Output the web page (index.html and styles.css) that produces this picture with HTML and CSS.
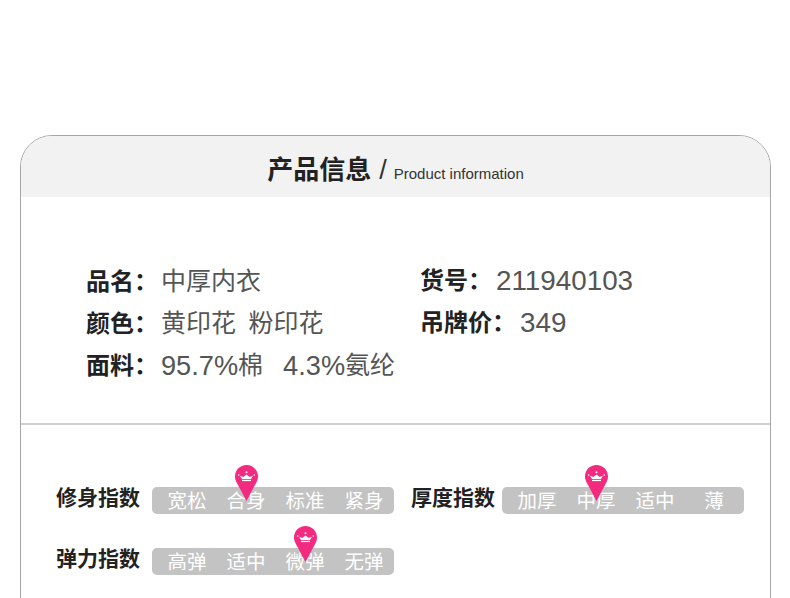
FILE: index.html
```html
<!DOCTYPE html>
<html lang="zh">
<head>
<meta charset="utf-8">
<title>产品信息</title>
<link rel="stylesheet" href="styles.css">
</head>
<body>
<svg class="defs" width="0" height="0" aria-hidden="true">
  <symbol id="pin" viewBox="0 0 23 36">
    <path fill="#f42a81" d="M11.5 0C5.1 0 0 5.100 0 11.500c0 2.300.7 4.300 1.800 6.200L11.500 36l9.700-18.300c1.100-1.900 1.800-3.900 1.800-6.200C23 5.100 17.900 0 11.500 0z"/>
    <path fill="#fff" d="M7 14 5 10.800l3.300 1.300 3.200-2.700 3.200 2.700 3.300-1.300L16 14z"/>
    <rect fill="#fff" x="7" y="14.800" width="9" height="1.300"/>
    <circle fill="#fff" cx="11.500" cy="7.300" r="1"/>
    <circle fill="#fff" cx="3.700" cy="10" r=".8"/>
    <circle fill="#fff" cx="19.300" cy="10" r=".8"/>
  </symbol>
</svg>
<main class="card">
  <header class="card-head">
    <h1 class="title">产品信息</h1>
    <span class="slash">/</span>
    <span class="title-en">Product information</span>
  </header>
  <section class="info">
    <div class="info-col info-col-left">
      <p class="info-row"><b class="key">品名：</b><span class="cjk">中厚内衣</span></p>
      <p class="info-row"><b class="key">颜色：</b><span class="cjk">黄印花&nbsp;&nbsp;粉印花</span></p>
      <p class="info-row"><b class="key">面料：</b><span class="num">95.7%</span><span class="cjk">棉</span><span class="num gap">4.3%</span><span class="cjk">氨纶</span></p>
    </div>
    <div class="info-col info-col-right">
      <p class="info-row"><b class="key">货号：</b><span class="num">211940103</span></p>
      <p class="info-row"><b class="key">吊牌价：</b><span class="num">349</span></p>
    </div>
  </section>
  <section class="specs">
    <div class="spec">
      <span class="spec-name">修身指数</span>
      <div class="scale">
        <span class="seg">宽松</span>
        <span class="seg seg-on">合身<svg class="pin"><use href="#pin"/></svg></span>
        <span class="seg">标准</span>
        <span class="seg">紧身</span>
      </div>
    </div>
    <div class="spec spec-right">
      <span class="spec-name">厚度指数</span>
      <div class="scale">
        <span class="seg">加厚</span>
        <span class="seg seg-on">中厚<svg class="pin"><use href="#pin"/></svg></span>
        <span class="seg">适中</span>
        <span class="seg">薄</span>
      </div>
    </div>
    <div class="spec">
      <span class="spec-name">弹力指数</span>
      <div class="scale">
        <span class="seg">高弹</span>
        <span class="seg">适中</span>
        <span class="seg seg-on">微弹<svg class="pin"><use href="#pin"/></svg></span>
        <span class="seg">无弹</span>
      </div>
    </div>
  </section>
</main>
</body>
</html>
```
FILE: styles.css
```css
html, body {
  margin: 0;
  height: 598px;
  overflow: hidden;
  background: #fff;
}
body {
  padding: 135px 19px 0 20px;
  box-sizing: border-box;
  font-family: "Liberation Sans", "Noto Sans CJK SC", sans-serif;
}
.defs {
  position: absolute;
}
.card {
  border: 1px solid #a6a6a6;
  border-radius: 32px 32px 0 0;
  height: 640px;
  overflow: hidden;
}
.card-head {
  height: 61px;
  background: #f2f2f2;
  display: flex;
  justify-content: center;
  align-items: baseline;
  color: #333;
  line-height: 63px;
  box-sizing: border-box;
}
.title {
  margin: 0;
  font-size: 26px;
  font-weight: 700;
  color: #222;
  font-family: "Noto Sans CJK SC", sans-serif;
  line-height: 63px;
}
.slash {
  font-size: 27px;
  margin: 0 7px 0 8px;
}
.title-en {
  font-size: 15px;
}
.info {
  display: flex;
  height: 228px;
  padding: 61px 0 0 65px;
  box-sizing: border-box;
  border-bottom: 2px solid #cfcfcf;
}
.info-col-left {
  width: 334px;
}
.info-row {
  margin: 0;
  height: 42px;
  line-height: 42px;
  color: #555;
  white-space: pre;
}
.key {
  font-size: 24px;
  margin-right: 3px;
  color: #222;
  font-family: "Noto Sans CJK SC", sans-serif;
  font-weight: 700;
  vertical-align: 1px;
}
.info-col-right .key {
  margin-right: 4px;
}
.cjk {
  font-size: 25px;
  word-spacing: .6px;
  font-family: "Noto Sans CJK SC", sans-serif;
  vertical-align: 1px;
}
.num {
  font-size: 27.200px;
}
.info-col-right .num {
  font-size: 27.800px;
}
.gap {
  margin-left: 20px;
}
.specs {
  display: grid;
  grid-template-columns: 355px 1fr;
  row-gap: 34px;
  padding: 62px 0 0 35px;
}
.spec {
  display: flex;
  align-items: center;
  height: 27px;
}
.spec-name {
  width: 96px;
  font-size: 21px;
  font-weight: 700;
  color: #222;
  font-family: "Noto Sans CJK SC", sans-serif;
  margin-bottom: 10px;
}
.spec-right .spec-name {
  width: 91px;
}
.scale {
  display: flex;
  width: 242px;
  height: 27px;
  box-sizing: border-box;
  padding-left: 5.500px;
  background: #c3c3c3;
  border-radius: 5px;
}
.seg {
  position: relative;
  width: 59px;
  text-align: center;
  font-size: 19.500px;
  line-height: 26px;
  color: #fff;
  font-family: "Noto Sans CJK SC", sans-serif;
}
.pin {
  position: absolute;
  left: 18px;
  top: -22px;
  width: 23px;
  height: 36px;
}
```
